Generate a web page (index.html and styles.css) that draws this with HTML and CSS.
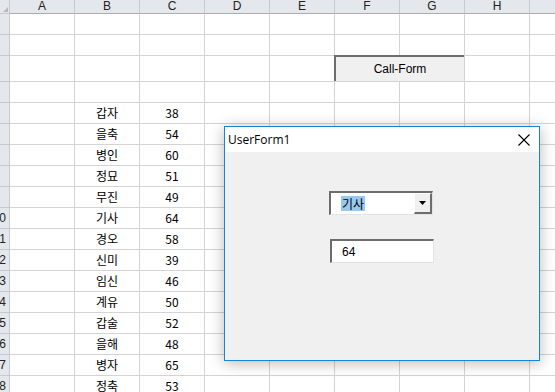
FILE: index.html
```html
<!DOCTYPE html>
<html lang="ko">
<head>
<meta charset="utf-8">
<link rel="stylesheet" href="styles.css">
</head>
<body>
<div class="sheet">
  <div class="corner"><span class="tri"></span></div>
  <div class="ch">A</div><div class="ch">B</div><div class="ch">C</div><div class="ch">D</div>
  <div class="ch">E</div><div class="ch">F</div><div class="ch">G</div><div class="ch">H</div><div class="ch last"></div>

  <div class="rh"></div><div class="c"></div><div class="c"></div><div class="c"></div><div class="c"></div><div class="c"></div><div class="c"></div><div class="c"></div><div class="c"></div><div class="c last"></div>
  <div class="rh"></div><div class="c"></div><div class="c"></div><div class="c"></div><div class="c"></div><div class="c"></div><div class="c"></div><div class="c"></div><div class="c"></div><div class="c last"></div>
  <div class="rh"></div><div class="c"></div><div class="c"></div><div class="c"></div><div class="c"></div><div class="c"></div><div class="c"></div><div class="c"></div><div class="c"></div><div class="c last"></div>
  <div class="rh"></div><div class="c"></div><div class="c"></div><div class="c"></div><div class="c"></div><div class="c"></div><div class="c"></div><div class="c"></div><div class="c"></div><div class="c last"></div>

  <div class="rh"></div><div class="c"></div><div class="c">갑자</div><div class="c">38</div><div class="c"></div><div class="c"></div><div class="c"></div><div class="c"></div><div class="c"></div><div class="c last"></div>
  <div class="rh"></div><div class="c"></div><div class="c">을축</div><div class="c">54</div><div class="c"></div><div class="c"></div><div class="c"></div><div class="c"></div><div class="c"></div><div class="c last"></div>
  <div class="rh"></div><div class="c"></div><div class="c">병인</div><div class="c">60</div><div class="c"></div><div class="c"></div><div class="c"></div><div class="c"></div><div class="c"></div><div class="c last"></div>
  <div class="rh"></div><div class="c"></div><div class="c">정묘</div><div class="c">51</div><div class="c"></div><div class="c"></div><div class="c"></div><div class="c"></div><div class="c"></div><div class="c last"></div>
  <div class="rh"></div><div class="c"></div><div class="c">무진</div><div class="c">49</div><div class="c"></div><div class="c"></div><div class="c"></div><div class="c"></div><div class="c"></div><div class="c last"></div>
  <div class="rh"><span>10</span></div><div class="c"></div><div class="c">기사</div><div class="c">64</div><div class="c"></div><div class="c"></div><div class="c"></div><div class="c"></div><div class="c"></div><div class="c last"></div>
  <div class="rh"><span>11</span></div><div class="c"></div><div class="c">경오</div><div class="c">58</div><div class="c"></div><div class="c"></div><div class="c"></div><div class="c"></div><div class="c"></div><div class="c last"></div>
  <div class="rh"><span>12</span></div><div class="c"></div><div class="c">신미</div><div class="c">39</div><div class="c"></div><div class="c"></div><div class="c"></div><div class="c"></div><div class="c"></div><div class="c last"></div>
  <div class="rh"><span>13</span></div><div class="c"></div><div class="c">임신</div><div class="c">46</div><div class="c"></div><div class="c"></div><div class="c"></div><div class="c"></div><div class="c"></div><div class="c last"></div>
  <div class="rh"><span>14</span></div><div class="c"></div><div class="c">계유</div><div class="c">50</div><div class="c"></div><div class="c"></div><div class="c"></div><div class="c"></div><div class="c"></div><div class="c last"></div>
  <div class="rh"><span>15</span></div><div class="c"></div><div class="c">갑술</div><div class="c">52</div><div class="c"></div><div class="c"></div><div class="c"></div><div class="c"></div><div class="c"></div><div class="c last"></div>
  <div class="rh"><span>16</span></div><div class="c"></div><div class="c">을해</div><div class="c">48</div><div class="c"></div><div class="c"></div><div class="c"></div><div class="c"></div><div class="c"></div><div class="c last"></div>
  <div class="rh"><span>17</span></div><div class="c"></div><div class="c">병자</div><div class="c">65</div><div class="c"></div><div class="c"></div><div class="c"></div><div class="c"></div><div class="c"></div><div class="c last"></div>
  <div class="rh"><span>18</span></div><div class="c"></div><div class="c">정축</div><div class="c">53</div><div class="c"></div><div class="c"></div><div class="c"></div><div class="c"></div><div class="c"></div><div class="c last"></div>
</div>

<div class="callform">Call-Form</div>

<div class="form">
  <div class="titlebar">
    <span class="title">UserForm1</span>
    <svg class="close" width="12" height="12" viewBox="0 0 12 12"><path d="M0.5 0.5 L11.5 11.5 M11.5 0.5 L0.5 11.5" stroke="#000" stroke-width="1.1" fill="none"/></svg>
  </div>
  <div class="formbody">
    <div class="combo">
      <div class="combo-text"><span class="sel">기사</span></div>
      <div class="combo-btn"><svg width="7" height="4" viewBox="0 0 7 4"><path d="M0 0 H7 L3.5 4 Z" fill="#000"/></svg></div>
    </div>
    <div class="textbox">64</div>
  </div>
</div>
</body>
</html>
```

FILE: styles.css
```css
html, body {
  margin: 0;
  padding: 0;
  background: #fff;
  overflow: hidden;
}
body {
  width: 555px;
  height: 392px;
  position: relative;
  font-family: "Noto Sans CJK KR", "Liberation Sans", sans-serif;
}
.sheet {
  display: grid;
  grid-template-columns: 10px repeat(8, 65px) 1fr;
  grid-template-rows: 14px 21px 21px 26px repeat(15, 21px);
  width: 555px;
}
.corner, .ch, .rh {
  background: #e4e7eb;
  box-sizing: border-box;
  border-right: 1px solid #c6cad0;
  border-bottom: 1px solid #c6cad0;
  color: #222;
  font-family: "Liberation Sans", sans-serif;
  font-size: 12px;
  line-height: 13px;
  overflow: hidden;
}
.corner { position: relative; }
.tri {
  position: absolute;
  right: 1px;
  bottom: 1px;
  width: 0;
  height: 0;
  border-left: 5px solid transparent;
  border-bottom: 5px solid #b5b9be;
}
.ch {
  text-align: center;
  border-bottom-color: #a9adb3;
}
.ch.last { border-right: none; }
.rh {
  display: flex;
  align-items: center;
  justify-content: flex-end;
  white-space: nowrap;
}
.rh span {
  margin-right: 3px;
  font-size: 12px;
}
.c {
  box-sizing: border-box;
  border-right: 1px solid #d4d4d4;
  border-bottom: 1px solid #d4d4d4;
  font-size: 12px;
  color: #000;
  display: flex;
  align-items: center;
  justify-content: center;
  line-height: 1;
}
.c.last { border-right: none; }

.callform {
  position: absolute;
  left: 334px;
  top: 55px;
  width: 130px;
  height: 26px;
  box-sizing: border-box;
  background: #f0f0f0;
  border-top: 2px solid #6d6d6d;
  border-left: 2px solid #6d6d6d;
  display: flex;
  align-items: center;
  justify-content: center;
  font-family: "Liberation Sans", sans-serif;
  font-size: 12px;
  color: #000;
}

.form {
  position: absolute;
  left: 224px;
  top: 126px;
  width: 316px;
  height: 235px;
  box-sizing: border-box;
  border: 1px solid #1883d7;
  background: #f0f0f0;
  box-shadow: 0 2px 14px rgba(0, 0, 0, 0.28);
  display: flex;
  flex-direction: column;
}
.titlebar {
  height: 25px;
  background: #fff;
  display: flex;
  align-items: center;
  justify-content: space-between;
  padding: 0 9px 0 3px;
  flex: none;
}
.title {
  font-family: "Open Sans", "Noto Sans", sans-serif;
  font-size: 12px;
  color: #000;
}
.close { display: block; }
.formbody {
  flex: 1;
  position: relative;
}
.combo {
  position: absolute;
  left: 104px;
  top: 39px;
  width: 104px;
  height: 24px;
  box-sizing: border-box;
  border-top: 2px solid #6d6d6d;
  border-left: 2px solid #6d6d6d;
  border-right: 1px solid #e3e3e3;
  border-bottom: 1px solid #e3e3e3;
  background: #fff;
  display: flex;
}
.combo-text {
  flex: 1;
  display: flex;
  align-items: center;
  padding-left: 10px;
  font-size: 12px;
}
.sel {
  background: #99c9ef;
  color: #000;
  line-height: 15px;
  padding: 0 1px;
}
.combo-btn {
  width: 18px;
  box-sizing: border-box;
  background: #f0f0f0;
  border-top: 1px solid #fff;
  border-left: 1px solid #fff;
  border-right: 2px solid #6d6d6d;
  border-bottom: 2px solid #6d6d6d;
  display: flex;
  align-items: center;
  justify-content: center;
}
.combo-btn svg { display: block; }
.textbox {
  position: absolute;
  left: 105px;
  top: 87px;
  width: 104px;
  height: 24px;
  box-sizing: border-box;
  border-top: 2px solid #6d6d6d;
  border-left: 2px solid #6d6d6d;
  border-right: 1px solid #e3e3e3;
  border-bottom: 1px solid #e3e3e3;
  background: #fff;
  display: flex;
  align-items: center;
  padding-left: 10px;
  font-family: "Liberation Sans", sans-serif;
  font-size: 12px;
}
```
